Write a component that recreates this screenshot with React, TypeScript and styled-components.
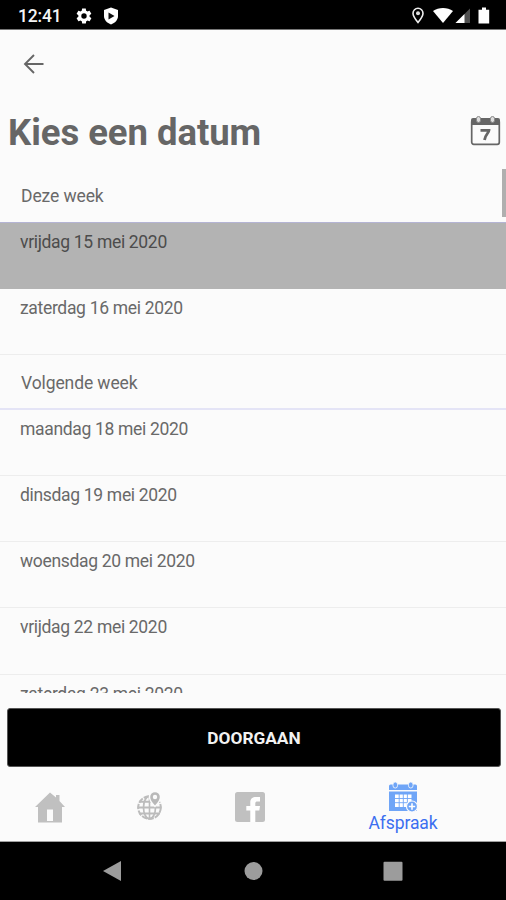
import React from "react";
import styled, { createGlobalStyle } from "styled-components";

const Global = createGlobalStyle`
  * { box-sizing: border-box; }
  body { margin: 0; background: #fbfbfb; font-family: Roboto, "Liberation Sans", sans-serif; }
  svg { display: block; flex: none; }
`;

const Screen = styled.div`
  display: flex;
  flex-direction: column;
  width: 506px;
  height: 900px;
  overflow: hidden;
  background: #fbfbfb;
  color: #696969;
`;

const StatusBar = styled.header`
  display: flex;
  justify-content: space-between;
  flex: none;
  height: 30px;
  padding: 2px 14px 0 18px;
  background: #000;
  border-bottom: 1px solid #777;
`;

const StatusGroup = styled.div<{ $gap?: number }>`
  display: flex;
  align-items: center;
  gap: ${(p) => p.$gap ?? 0}px;
`;

const Clock = styled.span`
  width: 47px;
  font-size: 17.5px;
  font-weight: 500;
  line-height: 28px;
  letter-spacing: -0.2px;
  color: #f4f4f4;
`;

const Toolbar = styled.nav`
  display: flex;
  align-items: center;
  flex: none;
  height: 68px;
  padding-left: 23px;
`;

const IconButton = styled.button`
  display: flex;
  padding: 0;
  border: 0;
  background: none;
`;

const TitleRow = styled.div`
  display: flex;
  align-items: flex-start;
  justify-content: space-between;
  flex: none;
  height: 70px;
  padding: 18px 5px 0 8px;
`;

const Title = styled.h1`
  margin: -6px 0 0;
  font-size: 36.5px;
  font-weight: 700;
  line-height: 46px;
  letter-spacing: -0.05px;
  color: #666;
`;

const DateList = styled.main`
  position: relative;
  flex: none;
  height: 525px;
  overflow: hidden;
  font-size: 17.5px;
  line-height: 20px;
`;

const ScrollThumb = styled.div`
  position: absolute;
  top: 1px;
  right: 0;
  width: 4px;
  height: 48px;
  background: #afafaf;
`;

const SectionTitle = styled.h2<{ $line: string; $thickness: number }>`
  height: 55px;
  margin: 0;
  padding: 18px 0 0 21px;
  border-bottom: ${(p) => p.$thickness}px solid ${(p) => p.$line};
  font-size: inherit;
  font-weight: 400;
  letter-spacing: -0.1px;
`;

const DateRow = styled.div<{ $selected?: boolean }>`
  height: 66.1px;
  padding: 9px 0 0 20px;
  border-bottom: 1px solid ${(p) => (p.$selected ? "#b3b3b3" : "#ededed")};
  background: ${(p) => (p.$selected ? "#b3b3b3" : "transparent")};
  color: ${(p) => (p.$selected ? "#4c4c4c" : "#696969")};
  letter-spacing: -0.32px;
`;

const Continue = styled.button`
  flex: none;
  height: 59px;
  margin: 15px 5px 0 7px;
  padding: 0;
  border: 1px solid #555;
  border-radius: 3px;
  background: #000;
  color: #f2f2f2;
  font-family: inherit;
  font-size: 17.3px;
  font-weight: 700;
`;

const Tabs = styled.nav`
  display: grid;
  grid-template-columns: 100px 100px 100px 206px;
  flex: none;
  height: 75px;
  border-bottom: 1px solid #a0a0a0;
`;

const Tab = styled.a`
  display: flex;
  flex-direction: column;
  align-items: center;
  padding-top: 24px;
  color: #c0c0c0;
`;

const ActiveTab = styled(Tab)`
  padding-top: 14px;
  color: #3b6ff0;
  font-size: 17.5px;
  line-height: 20px;
`;

const TabLabel = styled.span`
  letter-spacing: -0.1px;
`;

const SystemNav = styled.footer`
  display: flex;
  align-items: center;
  justify-content: space-between;
  flex: 1;
  padding: 0 103px 0 102px;
  background: #000;
`;

const weeks = [
  { title: "Deze week", line: "#b4b4d4", thickness: 1, days: ["vrijdag 15 mei 2020", "zaterdag 16 mei 2020"] },
  {
    title: "Volgende week",
    line: "#e4e4f6",
    thickness: 2,
    days: [
      "maandag 18 mei 2020",
      "dinsdag 19 mei 2020",
      "woensdag 20 mei 2020",
      "vrijdag 22 mei 2020",
      "zaterdag 23 mei 2020",
    ],
  },
];

const GearIcon = () => (
  <svg width="18" height="18" viewBox="0 0 24 24" fill="#fff">
    <path d="M19.4 13c.1-.7.1-1.300 0-2l2.100-1.700c.2-.1.300-.4.100-.6l-2-3.500c-.1-.2-.4-.3-.6-.2l-2.500 1a7 7 0 0 0-1.700-1L14.400 2.400c0-.2-.2-.4-.5-.4h-4c-.2 0-.4.200-.5.400L9 5a7 7 0 0 0-1.700 1L4.900 5c-.2-.1-.5 0-.6.200l-2 3.500c-.1.200-.1.500.1.600L4.500 11a8 8 0 0 0 0 2l-2.100 1.700c-.2.100-.2.400-.1.600l2 3.500c.1.200.4.300.6.200l2.500-1a7 7 0 0 0 1.700 1l.4 2.600c0 .2.200.4.500.4h4c.2 0 .4-.2.500-.4l.4-2.600a7 7 0 0 0 1.700-1l2.500 1c.2.100.5 0 .6-.2l2-3.500c.1-.2.100-.5-.1-.6zM12 15.600a3.600 3.600 0 1 1 0-7.200 3.600 3.600 0 0 1 0 7.200z" />
  </svg>
);

const ShieldIcon = () => (
  <svg width="16" height="18" viewBox="0 0 16 18">
    <path d="M8 0.500l7 2.500v6c0 4-3 7-7 8.500-4-1.500-7-4.500-7-8.500V3z" fill="#fff" />
    <path d="M5.500 5.500l6 3.500-6 3.500z" fill="#111" />
  </svg>
);

const StatusIcons = () => (
  <svg width="80" height="20" viewBox="0 0 80 20">
    <path d="M6 2.300a5 5 0 0 1 5 5c0 3.300-5 9.200-5 9.200S1 10.600 1 7.300a5 5 0 0 1 5-5z" fill="none" stroke="#eee" strokeWidth="1.600" />
    <circle cx="6" cy="7.300" r="2" fill="#ddd" />
    <path d="M21 5c5.500-4 14.500-4 20 0L31 17z" fill="#fff" />
    <path d="M43.500 17L58 2.500V17z" fill="#505050" />
    <path d="M43.500 17L52.500 8v9z" fill="#fff" />
    <path d="M66.500 3.700H70V1.500h4v2.200h3.200V17.500H66.500z" fill="#fff" />
  </svg>
);

const BackIcon = () => (
  <svg width="22" height="22" viewBox="0 0 22 22" fill="none" stroke="#666" strokeWidth="1.900">
    <path d="M20.500 11H2M11 2L2 11l9 9" />
  </svg>
);

const CalendarIcon = () => (
  <svg width="31" height="31" viewBox="0 0 31 31">
    <rect x="1.700" y="4" width="27.600" height="24.300" rx="2" fill="#fbfbfb" stroke="#666" strokeWidth="1.700" />
    <path d="M1 9V4q0-2 2-2h25q2 0 2 2v5z" fill="#666" />
    <g fill="#ddd" stroke="#888" strokeWidth="1">
      <rect x="6.500" y="0.500" width="4" height="6" rx="2" />
      <rect x="20.500" y="0.500" width="4" height="6" rx="2" />
    </g>
    <path d="M10.500 14.300h8.500c0 2.500-4 4.500-4.500 9.700" fill="none" stroke="#666" strokeWidth="2.800" />
  </svg>
);

const HomeIcon = () => (
  <svg width="32" height="32" viewBox="0 0 32 32" fill="currentColor">
    <path d="M16 1.500l6 5V4h3.500v6L31 16h-3v15.500h-9V18.500h-6v13H4V16H1z" />
    <path d="M13 30h6v1.500h-6z" />
  </svg>
);

const GlobeIcon = () => (
  <svg width="28" height="30" viewBox="0 0 28 30">
    <g fill="none" stroke="#bcbcbc">
      <circle cx="13.500" cy="16.500" r="11.300" strokeWidth="2" strokeDasharray="5.500 1.200" />
      <ellipse cx="13.500" cy="16.500" rx="6" ry="11.300" strokeWidth="1.700" />
      <path d="M13.500 5v23" strokeWidth="1.600" />
      <path d="M3 10.800h21M1.500 16.500h24M3 22.500h21" strokeWidth="2.100" />
    </g>
    <path d="M19 0.500a5.500 5.500 0 0 1 5.500 5.500c0 4-5.500 9.500-5.500 9.500S13.500 10 13.500 6A5.500 5.500 0 0 1 19 .5z" fill="#b9b9b9" stroke="#fbfbfb" strokeWidth="1.400" />
    <circle cx="19" cy="6" r="2.200" fill="#fbfbfb" />
  </svg>
);

const FacebookIcon = () => (
  <svg width="32" height="32" viewBox="0 0 32 32">
    <rect x="1" y="1" width="30" height="30" rx="2.500" fill="currentColor" />
    <path d="M16.300 31V19.500h-4V15h4v-3.500C16.300 7.500 18.500 6 22 6h4v4.500h-2.500c-1.500 0-2.200.500-2.200 2V15H26l-.7 4.500h-4V31z" fill="#fff" />
  </svg>
);

const AppointmentIcon = () => (
  <svg width="32" height="32" viewBox="0 0 32 32">
    <path d="M2 9V5q0-1.500 1.500-1.500h25Q30 3.500 30 5v4z" fill="#6fa5f7" />
    <path d="M2 10.500h28V30H2z" fill="#6fa5f7" />
    <g fill="#6fa5f7" stroke="#fbfbfb" strokeWidth="0.800">
      <rect x="6" y="1" width="4.500" height="6" rx="2.200" />
      <rect x="21.500" y="1" width="4.500" height="6" rx="2.200" />
    </g>
    <path d="M8 13.500h16.500v12.500H8z" fill="#fff" />
    <path d="M12.200 13v13.500M16.300 13v13.500M20.400 13v13.500M7.500 17.500h17.500M7.500 21.700h17.500" stroke="#6fa5f7" strokeWidth="0.900" />
    <circle cx="25" cy="25.500" r="5.500" fill="#6fa5f7" stroke="#fbfbfb" strokeWidth="1.200" />
    <path d="M25 22.300v6.400M21.800 25.500h6.400" stroke="#fff" strokeWidth="1.600" />
  </svg>
);

const BackKey = () => (
  <svg width="20" height="22" viewBox="0 0 20 22">
    <path d="M1 11L19 1v20z" fill="#9c9c9c" />
  </svg>
);

const HomeKey = () => (
  <svg width="20" height="20" viewBox="0 0 20 20">
    <circle cx="10.500" cy="10" r="9" fill="#9c9c9c" />
  </svg>
);

const RecentKey = () => (
  <svg width="20" height="20" viewBox="0 0 20 20">
    <rect x="0.500" y="0.700" width="19" height="19" rx="1" fill="#9c9c9c" />
  </svg>
);

export default function App() {
  return (
    <>
      <Global />
      <Screen>
        <StatusBar>
          <StatusGroup $gap={10}>
            <Clock>12:41</Clock>
            <GearIcon />
            <ShieldIcon />
          </StatusGroup>
          <StatusGroup>
            <StatusIcons />
          </StatusGroup>
        </StatusBar>
        <Toolbar>
          <IconButton aria-label="Terug"><BackIcon /></IconButton>
        </Toolbar>
        <TitleRow>
          <Title>Kies een datum</Title>
          <IconButton aria-label="Kalender"><CalendarIcon /></IconButton>
        </TitleRow>
        <DateList>
          {weeks.map((week, w) => (
            <React.Fragment key={week.title}>
              <SectionTitle $line={week.line} $thickness={week.thickness}>{week.title}</SectionTitle>
              {week.days.map((day, d) => (
                <DateRow key={day} $selected={w === 0 && d === 0}>{day}</DateRow>
              ))}
            </React.Fragment>
          ))}
          <ScrollThumb />
        </DateList>
        <Continue>DOORGAAN</Continue>
        <Tabs>
          <Tab><HomeIcon /></Tab>
          <Tab><GlobeIcon /></Tab>
          <Tab><FacebookIcon /></Tab>
          <ActiveTab>
            <AppointmentIcon />
            <TabLabel>Afspraak</TabLabel>
          </ActiveTab>
        </Tabs>
        <SystemNav>
          <BackKey />
          <HomeKey />
          <RecentKey />
        </SystemNav>
      </Screen>
    </>
  );
}
